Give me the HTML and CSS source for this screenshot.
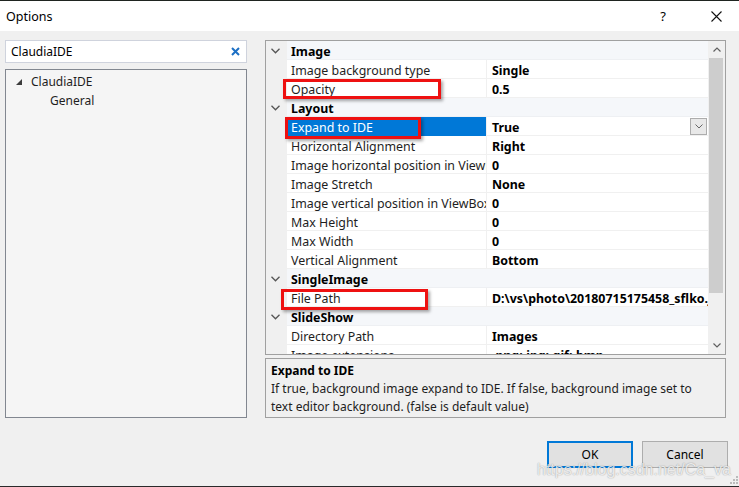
FILE: index.html
```html
<!DOCTYPE html>
<html>
<head>
<meta charset="utf-8">
<link rel="stylesheet" href="styles.css">
</head>
<body>
<div class="window">
  <div class="titlebar">
    <span class="title">Options</span>
    <span class="help">?</span>
    <span class="close"><svg width="11" height="11" viewBox="0 0 11 11"><path d="M0.5 0.5L10.5 10.5M10.5 0.5L0.5 10.5" stroke="#111" stroke-width="1.1" fill="none"/></svg></span>
  </div>
  <div class="content">
    <div class="left">
      <div class="search">
        <span class="search-text">ClaudiaIDE</span>
        <svg class="clear" width="9" height="9" viewBox="0 0 9 9"><path d="M1 1L8 8M8 1L1 8" stroke="#1c6fc4" stroke-width="2" fill="none"/></svg>
      </div>
      <div class="tree">
        <div class="node"><svg class="tri" width="6" height="6" viewBox="0 0 6 6"><polygon points="6,0 6,6 0,6" fill="#3c3c3c"/></svg><span>ClaudiaIDE</span></div>
        <div class="node child">General</div>
      </div>
    </div>
    <div class="right">
      <div class="grid">
        <div class="rows">
          <div class="row"><div class="m"><svg width="9" height="6" viewBox="0 0 9 6"><path d="M0.5 0.8L4.5 4.8L8.5 0.8" stroke="#555" stroke-width="1.3" fill="none"/></svg></div><div class="cat">Image</div></div>
          <div class="row"><div class="m"></div><div class="name">Image background type</div><div class="val">Single</div></div>
          <div class="row"><div class="m"></div><div class="name">Opacity</div><div class="val">0.5</div></div>
          <div class="row"><div class="m"><svg width="9" height="6" viewBox="0 0 9 6"><path d="M0.5 0.8L4.5 4.8L8.5 0.8" stroke="#555" stroke-width="1.3" fill="none"/></svg></div><div class="cat">Layout</div></div>
          <div class="row"><div class="m"></div><div class="name sel">Expand to IDE</div><div class="val">True<span class="dd"><svg width="8" height="5" viewBox="0 0 8 5"><path d="M0.5 0.5L4 4L7.5 0.5" stroke="#666" stroke-width="1" fill="none"/></svg></span></div></div>
          <div class="row"><div class="m"></div><div class="name">Horizontal Alignment</div><div class="val">Right</div></div>
          <div class="row"><div class="m"></div><div class="name">Image horizontal position in ViewBox</div><div class="val">0</div></div>
          <div class="row"><div class="m"></div><div class="name">Image Stretch</div><div class="val">None</div></div>
          <div class="row"><div class="m"></div><div class="name">Image vertical position in ViewBox</div><div class="val">0</div></div>
          <div class="row"><div class="m"></div><div class="name">Max Height</div><div class="val">0</div></div>
          <div class="row"><div class="m"></div><div class="name">Max Width</div><div class="val">0</div></div>
          <div class="row"><div class="m"></div><div class="name">Vertical Alignment</div><div class="val">Bottom</div></div>
          <div class="row"><div class="m"><svg width="9" height="6" viewBox="0 0 9 6"><path d="M0.5 0.8L4.5 4.8L8.5 0.8" stroke="#555" stroke-width="1.3" fill="none"/></svg></div><div class="cat">SingleImage</div></div>
          <div class="row"><div class="m"></div><div class="name">File Path</div><div class="val">D:\vs\photo\20180715175458_sflko.jpg</div></div>
          <div class="row"><div class="m"><svg width="9" height="6" viewBox="0 0 9 6"><path d="M0.5 0.8L4.5 4.8L8.5 0.8" stroke="#555" stroke-width="1.3" fill="none"/></svg></div><div class="cat">SlideShow</div></div>
          <div class="row"><div class="m"></div><div class="name">Directory Path</div><div class="val">Images</div></div>
          <div class="row"><div class="m"></div><div class="name">Image extensions</div><div class="val">.png;.jpg;.gif;.bmp</div></div>
        </div>
        <div class="scrollbar">
          <div class="arrow"><svg width="8" height="5" viewBox="0 0 8 5"><path d="M0.5 4.5L4 1L7.5 4.5" stroke="#606060" stroke-width="1.2" fill="none"/></svg></div>
          <div class="thumb"></div>
          <div class="track"></div>
          <div class="arrow"><svg width="8" height="5" viewBox="0 0 8 5"><path d="M0.5 0.5L4 4L7.5 0.5" stroke="#606060" stroke-width="1.2" fill="none"/></svg></div>
        </div>
      </div>
      <div class="desc">
        <div class="desc-title">Expand to IDE</div>
        <div class="desc-text">If true, background image expand to IDE. If false, background image set to text editor background. (false is default value)</div>
      </div>
    </div>
  </div>
  <div class="footer">
    <button class="btn default">OK</button>
    <button class="btn">Cancel</button>
  </div>
  <div class="mark mark-opacity"></div>
  <div class="mark mark-expand"></div>
  <div class="mark mark-file"></div>
  <div class="watermark">https://blog.csdn.net/Ca_va</div>
  <svg class="grip" width="8" height="8" viewBox="0 0 8 8"><rect x="6" y="0" width="2" height="2" fill="#bbb"/><rect x="3" y="3" width="2" height="2" fill="#bbb"/><rect x="6" y="3" width="2" height="2" fill="#bbb"/><rect x="0" y="6" width="2" height="2" fill="#bbb"/><rect x="3" y="6" width="2" height="2" fill="#bbb"/><rect x="6" y="6" width="2" height="2" fill="#bbb"/></svg>
</div>
</body>
</html>
```

FILE: styles.css
```css
html, body {
  margin: 0;
  padding: 0;
  background: #f0f0f0;
}
body {
  font-family: "Noto Sans", "Open Sans", sans-serif;
  font-size: 12px;
  color: #1e1e1e;
}
.window {
  position: relative;
  width: 739px;
  height: 487px;
  box-sizing: border-box;
  border-top: 1px solid #1f2420;
  border-bottom: 1px solid #2a2a2a;
  background: #f0f0f0;
  overflow: hidden;
}
.titlebar {
  height: 30px;
  background: #fff;
  display: flex;
  align-items: center;
  padding-left: 6px;
  font-size: 12.5px;
  color: #000;
}
.title { flex: 1; }
.help {
  width: 12px;
  margin-right: 42px;
  font-size: 13px;
  text-align: center;
}
.close {
  display: flex;
  margin-right: 17px;
}
.content {
  display: flex;
  padding: 9px 0 0 5px;
}
.left {
  width: 242px;
  display: flex;
  flex-direction: column;
  gap: 6px;
}
.search {
  height: 23px;
  box-sizing: border-box;
  border: 1px solid #cfd3dd;
  background: #fff;
  display: flex;
  align-items: center;
  padding: 0 6px 0 5px;
  color: #000;
}
.search-text { flex: 1; }
.tree {
  height: 349px;
  box-sizing: border-box;
  border: 1px solid #828790;
  background: #f5f5f5;
  padding-top: 2px;
}
.node {
  height: 19px;
  line-height: 19px;
  display: flex;
  align-items: center;
  padding-left: 10px;
  color: #1e1e1e;
}
.node .tri { margin-right: 9px; margin-top: 1px; }
.node.child { padding-left: 44px; }
.right {
  margin-left: 18px;
  width: 461px;
  display: flex;
  flex-direction: column;
  gap: 3px;
}
.grid {
  height: 315px;
  box-sizing: border-box;
  border: 1px solid #a0a0a0;
  background: #fff;
  display: flex;
}
.rows {
  width: 442px;
  overflow: hidden;
  font-size: 12.4px;
}
.row {
  display: flex;
  height: 19px;
  line-height: 22px;
}
.m {
  width: 21px;
  flex: none;
  background: #f0f0f0;
  display: flex;
  align-items: center;
  justify-content: center;
  padding-right: 2px;
  box-sizing: border-box;
}
.cat {
  flex: 1;
  background: #f5f7fa;
  font-weight: bold;
  color: #000;
  padding-left: 4px;
  border-bottom: 1px solid #eef0f3;
  overflow: hidden;
}
.name {
  width: 199px;
  flex: none;
  box-sizing: border-box;
  padding-left: 4px;
  white-space: nowrap;
  overflow: hidden;
  border-bottom: 1px solid #f0f0f0;
}
.name.sel {
  background: #0078d7;
  color: #fff;
  border-bottom-color: #0078d7;
}
.val {
  flex: 1;
  min-width: 0;
  border-left: 1px solid #f0f0f0;
  border-bottom: 1px solid #f0f0f0;
  padding-left: 5px;
  font-weight: bold;
  color: #000;
  white-space: nowrap;
  overflow: hidden;
  display: flex;
  align-items: flex-start;
}
.dd {
  margin-left: auto;
  margin-right: 1px;
  margin-top: 1px;
  width: 17px;
  height: 17px;
  box-sizing: border-box;
  border: 1px solid #adadad;
  background: #e8e8e8;
  display: flex;
  align-items: center;
  justify-content: center;
}
.scrollbar {
  width: 17px;
  background: #f0f0f0;
  display: flex;
  flex-direction: column;
}
.arrow {
  height: 17px;
  flex: none;
  display: flex;
  align-items: center;
  justify-content: center;
}
.thumb {
  height: 235px;
  width: 14px;
  margin-left: 1px;
  background: #cdcdcd;
}
.track { flex: 1; }
.desc {
  height: 60px;
  box-sizing: border-box;
  border: 1px solid #a0a0a0;
  background: #f0f0f0;
  padding: 3px 14px 0 5px;
  line-height: 18px;
  color: #1e1e1e;
}
.desc-title {
  font-weight: bold;
  color: #000;
}
.footer {
  display: flex;
  justify-content: flex-end;
  gap: 9px;
  padding: 23px 11px 0 0;
}
.btn {
  width: 86px;
  height: 27px;
  box-sizing: border-box;
  border: 1px solid #adadad;
  background: #e1e1e1;
  font-family: "Noto Sans", "Open Sans", sans-serif;
  font-size: 12px;
  color: #000;
  padding: 0;
}
.btn.default {
  border: 2px solid #0078d7;
}
.mark {
  position: absolute;
  box-sizing: border-box;
  border: 3px solid #ee1111;
  box-shadow: 2px 2px 3px rgba(0, 0, 0, 0.35);
}
.mark-opacity { left: 283px; top: 78px; width: 158px; height: 20px; }
.mark-expand { left: 285px; top: 116px; width: 136px; height: 22px; }
.mark-file { left: 281px; top: 288px; width: 147px; height: 21px; }
.watermark {
  position: absolute;
  left: 537px;
  top: 460px;
  font-family: "Liberation Sans", Arial, sans-serif;
  font-size: 16px;
  color: rgba(255, 255, 255, 0.8);
  text-shadow: 0 0 1px rgba(0, 0, 0, 0.3), 0 0 2px rgba(0, 0, 0, 0.15);
  white-space: nowrap;
}
.grip {
  position: absolute;
  right: 1px;
  bottom: 2px;
}
```
